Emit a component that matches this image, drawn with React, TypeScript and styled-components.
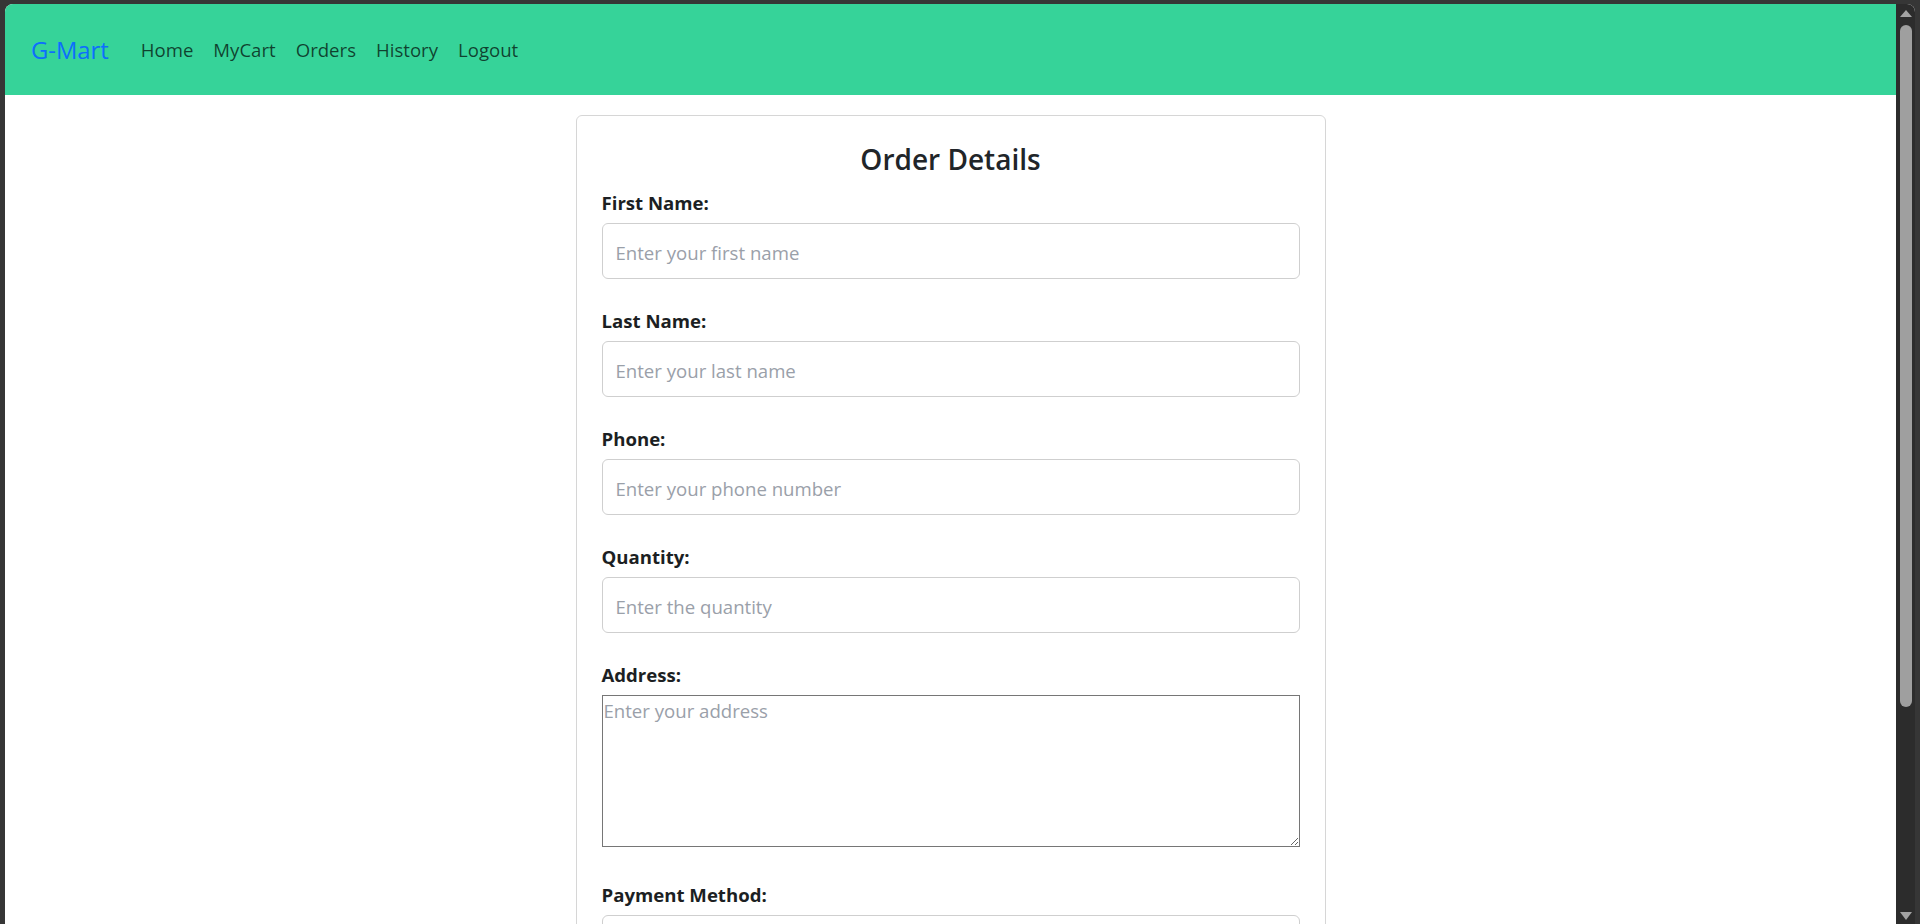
import styled, { createGlobalStyle } from "styled-components"

const GlobalStyle = createGlobalStyle`
html, body {
  margin: 0;
  background: #363636;
  overflow: hidden;
}
* {
  box-sizing: border-box;
}
`

const Window = styled.div`
background: #fff;
border-radius: 8px 8px 0 0;
color: #212529;
display: flex;
font-family: "Open Sans", "Noto Sans", sans-serif;
height: 920px;
margin: 4px 0 0 5px;
overflow: hidden;
width: 1910px;
`

const Content = styled.div`
flex: 1;
min-width: 0;
overflow: hidden;
`

const Scrollbar = styled.div`
align-items: center;
background: #2c2c2c;
display: flex;
flex-direction: column;
padding: 6px 0 4px;
width: 19px;
`

const Arrow = styled.div<{ $down?: boolean }>`
border-left: 6px solid transparent;
border-right: 6px solid transparent;
${props => props.$down
  ? "border-top: 8px solid #a3a3a3; margin-top: auto;"
  : "border-bottom: 7px solid #a3a3a3;"}
height: 0;
width: 0;
`

const Thumb = styled.div`
background: #9f9f9f;
border-radius: 6px;
height: 682px;
margin-top: 8px;
width: 12px;
`

const Navbar = styled.nav`
align-items: center;
background: #36d399;
display: flex;
height: 91px;
padding: 0 26px;
`

const Brand = styled.a`
color: #0d6efd;
font-size: 23.8px;
margin-right: 22px;
text-decoration: none;
`

const NavLink = styled.a`
color: rgba(0, 0, 0, 0.7);
font-size: 18.6px;
padding: 0 10px;
text-decoration: none;
`

const Card = styled.form`
border: 1px solid #d6d6d6;
border-radius: 6px;
margin: 20px auto 0;
padding: 25px;
width: 750px;
`

const Title = styled.h4`
font-size: 28px;
font-weight: 600;
line-height: 36px;
margin: 0 0 11px;
text-align: center;
`

const Field = styled.div<{ $gap?: number }>`
margin-bottom: ${props => props.$gap ?? 27}px;
`

const Label = styled.label`
color: #1c1f23;
display: block;
font-size: 18.6px;
font-weight: 700;
line-height: 30px;
margin-bottom: 5px;
`

const Input = styled.input`
border: 1px solid #cfcfcf;
border-radius: 6px;
color: #212529;
display: block;
font: inherit;
font-size: 18.6px;
height: 56px;
line-height: 30px;
padding: 13px 13px 11px;
width: 100%;

&::placeholder {
  color: #9aa0a9;
}
`

const TextArea = styled.textarea`
border: 1px solid #767676;
display: block;
font: inherit;
font-size: 18.6px;
height: 152px;
line-height: 26px;
padding: 2px 1px 1px;
width: 100%;

&::placeholder {
  color: #9aa0a9;
}
`

const Select = styled.select`
appearance: none;
background: #fff;
border: 1px solid #cfcfcf;
border-radius: 6px;
color: #212529;
display: block;
font: inherit;
font-size: 18.6px;
height: 56px;
padding: 12px 13px;
width: 100%;
`

const SubmitButton = styled.button`
background: #0d6efd;
border: none;
border-radius: 6px;
color: #fff;
font: inherit;
font-size: 18.6px;
padding: 10px 20px;
`

const fields = [
  { label: "First Name:", placeholder: "Enter your first name", type: "text" },
  { label: "Last Name:", placeholder: "Enter your last name", type: "text" },
  { label: "Phone:", placeholder: "Enter your phone number", type: "tel" },
  { label: "Quantity:", placeholder: "Enter the quantity", type: "number" },
]

const links = ["Home", "MyCart", "Orders", "History", "Logout"]

export default function App() {
  return <>
    <GlobalStyle />
    <Window>
      <Content>
        <Navbar>
          <Brand href="#">G-Mart</Brand>
          {links.map(link => <NavLink key={link} href="#">{link}</NavLink>)}
        </Navbar>
        <Card onSubmit={e => e.preventDefault()}>
          <Title>Order Details</Title>
          {fields.map(field => <Field key={field.label}>
            <Label>{field.label}</Label>
            <Input type={field.type} placeholder={field.placeholder} />
          </Field>)}
          <Field $gap={33}>
            <Label>Address:</Label>
            <TextArea placeholder="Enter your address" />
          </Field>
          <Field>
            <Label>Payment Method:</Label>
            <Select defaultValue="">
              <option value="" disabled></option>
              <option value="cod">Cash on Delivery</option>
              <option value="card">Card</option>
              <option value="upi">UPI</option>
            </Select>
          </Field>
          <SubmitButton type="submit">Place Order</SubmitButton>
        </Card>
      </Content>
      <Scrollbar>
        <Arrow />
        <Thumb />
        <Arrow $down />
      </Scrollbar>
    </Window>
  </>
}
